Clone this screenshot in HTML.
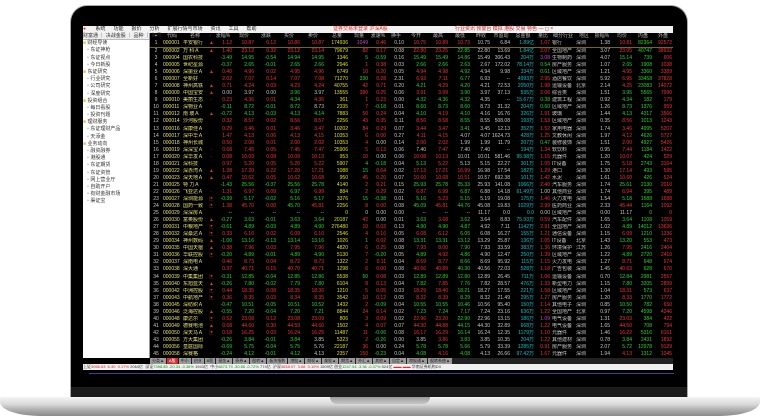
<!DOCTYPE html>
<html><head><meta charset="utf-8">
<style>
*{margin:0;padding:0;box-sizing:border-box}
body{width:760px;height:420px;background:#fff;position:relative;overflow:hidden;font-family:"Liberation Sans","Noto Sans CJK SC",sans-serif}
.lid{position:absolute;left:70px;top:5px;width:618px;height:393px;background:#000;border-radius:17px 17px 0 0;border:1px solid #aaa;border-bottom:none}
.chin{position:absolute;left:71px;top:387px;width:616px;height:10px;background:#1c1c1c}
.base{position:absolute;left:0;top:397px;width:760px;height:19px;background:linear-gradient(#f4f4f4,#d8d8d8 40%,#b8b8b8 60%,#8a8a8a);border-radius:2px 2px 40px 40px/2px 2px 14px 14px}
.notch{position:absolute;left:330px;top:397px;width:100px;height:7px;background:linear-gradient(#9a9a9a,#c8c8c8);border-radius:0 0 8px 8px}
.win{position:absolute;left:83px;top:26px;width:590px;height:344px;background:#000;font-size:5px;line-height:7px}
.menu{position:absolute;left:0;top:0;width:590px;height:7px;background:#f2f2f2;color:#222}
.menu span{margin-right:8px}
.side{position:absolute;left:0;top:7px;width:67px;height:325px;background:#fff;color:#333;border-right:1px solid #999}
.side div{height:7.2px;line-height:7.2px;white-space:nowrap}
.grid{position:absolute;left:67px;top:7px;width:523px;overflow:hidden}
table{border-collapse:collapse;table-layout:fixed;width:523px}
td{height:7.05px;line-height:7px;color:#c8c8c8;text-align:right;white-space:nowrap;overflow:hidden;padding:0 1px;font-size:5px}
tr.h td{color:#bbb;text-align:center}
td:nth-child(1){text-align:center}
td:nth-child(2),td:nth-child(3){text-align:left}
td:nth-child(21),td:nth-child(22){text-align:left}
.r{color:#ff2e2e}.g{color:#22dd22}.y{color:#e0e000}.c{color:#00c8d0}.n{color:#e6e070}.p{color:#d040d0}.m{color:#e03030;text-align:center}
tr.f td{border-bottom:1px solid #776a00}
.tabs{position:absolute;left:67px;top:332px;width:523px;height:6px;background:#222;font-size:4px;line-height:6px;color:#222}
.tabs span{display:inline-block;background:#9a9a9a;padding:0 2px;margin-right:1px;height:6px}
.status{position:absolute;left:0;top:338px;width:590px;height:6px;background:#f0f0f0;font-size:4px;line-height:6px;color:#333;white-space:nowrap}
.pl{position:absolute;left:89px;top:373px;width:585px;height:1px;background:#4a3aa0}
</style></head><body>
<div class="lid"></div>
<div class="chin"></div>
<div class="base"></div>
<div class="notch"></div>
<div class="pl"></div>
<div class="win">
 <div class="menu"><span style="color:#e33">●</span> <span>系统</span><span>功能</span><span>报价</span><span>分析</span><span>扩展行情与市场</span><span>资讯</span><span>工具</span><span>帮助</span><span style="position:absolute;left:250px;color:#e22">证券交易未登录 沪深A股</span><span style="position:absolute;left:372px;color:#c22">行业资讯 预警台 模拟 港股 交易 特色 — ◻ ×</span></div>
 <div class="side">
  <div style="background:#eee;border-bottom:1px solid #bbb">财富通 ｜ 决战金股 ｜ 品种 ｜ 资讯</div>
  <div><span style="color:#e8c040">■</span> 财经导读</div>
  <div>&nbsp;&nbsp;&nbsp;▫ 东证神枪</div><div>&nbsp;&nbsp;&nbsp;▫ 东证视点</div><div>&nbsp;&nbsp;&nbsp;▫ 今日新股</div>
  <div><span style="color:#e8c040">■</span> 东证研究</div>
  <div>&nbsp;&nbsp;&nbsp;▫ 行业研究</div><div>&nbsp;&nbsp;&nbsp;▫ 公司研究</div><div>&nbsp;&nbsp;&nbsp;▫ 深度研究</div>
  <div><span style="color:#e8c040">■</span> 投资组合</div>
  <div>&nbsp;&nbsp;&nbsp;▫ 每日看股</div><div>&nbsp;&nbsp;&nbsp;▫ 投资刊题</div>
  <div><span style="color:#e8c040">■</span> 理财服务</div>
  <div>&nbsp;&nbsp;&nbsp;▫ 东证理财产品</div><div>&nbsp;&nbsp;&nbsp;▫ 天添金</div>
  <div><span style="color:#e8c040">■</span> 业务动向</div>
  <div>&nbsp;&nbsp;&nbsp;▫ 融资融券</div><div>&nbsp;&nbsp;&nbsp;▫ 港股通</div><div>&nbsp;&nbsp;&nbsp;▫ 东证期货</div><div>&nbsp;&nbsp;&nbsp;▫ 东证资管</div><div>&nbsp;&nbsp;&nbsp;▫ 网上营业厅</div><div>&nbsp;&nbsp;&nbsp;▫ 自助开户</div><div>&nbsp;&nbsp;&nbsp;▫ 有财金融市场</div><div>&nbsp;&nbsp;&nbsp;▫ 渠证宝</div>
 </div>
 <div class="grid"><table>
<colgroup><col style="width:12px"><col style="width:20px"><col style="width:26px"><col style="width:5px"><col style="width:20px"><col style="width:22px"><col style="width:22px"><col style="width:24px"><col style="width:24px"><col style="width:24px"><col style="width:20px"><col style="width:18px"><col style="width:18px"><col style="width:22px"><col style="width:22px"><col style="width:22px"><col style="width:20px"><col style="width:20px"><col style="width:24px"><col style="width:16px"><col style="width:24px"><col style="width:18px"><col style="width:18px"><col style="width:22px"><col style="width:20px"><col style="width:20px"></colgroup>
<tr class="h"><td>▪<td>代码<td>名称<td>·<td>涨幅%<td>现价<td>涨跌<td>买价<td>卖价<td>总量<td>现量<td>涨速%<td>换手<td>今开<td>最高<td>最低<td>昨收<td>市盈动<td>总金额<td>量比<td>细分行业<td>地区<td>振幅%<td>均价<td>内盘<td>外盘</tr>
<tr class="f"><td>1<td class=n>000001<td class=n>平安银行<td class=m>▲<td class=r>1.12<td class=r>10.87<td class=r>0.12<td class=r>10.86<td class=r>10.87<td class=y>174936<td class=p>1049<td class=r>0.46<td>0.10<td class=r>10.75<td class=r>10.89<td class=r>10.73<td>10.75<td>6.84<td class=c>1.89亿<td class=r>1.07<td>银行<td>深圳<td>1.38<td class=r>10.81<td class=g>82364<td class=r>92572</tr>
<tr><td>2<td class=n>000002<td class=n>万 科Ａ<td class=m>▲<td class=r>1.40<td class=r>23.12<td class=r>0.32<td class=r>23.12<td class=r>23.14<td class=y>79679<td class=r>82<td class=r>0.17<td>0.08<td class=r>22.80<td class=r>23.25<td class=g>22.85<td>22.80<td>13.69<td class=c>1.84亿<td class=r>2.07<td>全国地产<td>深圳<td>3.07<td class=r>23.05<td class=g>40747<td class=r>38932</tr>
<tr><td>3<td class=n>000004<td class=n>国农科技<td><td class=g>-3.49<td class=g>14.95<td class=g>-0.54<td class=g>14.94<td class=g>14.95<td class=y>1346<td class=g>5<td class=g>-0.59<td>0.16<td class=g>15.49<td class=g>15.49<td class=g>14.86<td>15.49<td>306.43<td class=c>204万<td class=p>3.08<td>生物制药<td>深圳<td>4.07<td class=g>15.14<td class=g>739<td class=r>606</tr>
<tr><td>4<td class=n>000005<td class=n>世纪星源<td><td class=g>-0.37<td class=g>2.65<td class=g>-0.01<td class=g>2.65<td class=g>2.66<td class=y>2946<td class=r>1<td class=r>0.38<td>0.03<td class=g>2.66<td class=g>2.66<td class=g>2.63<td>2.67<td>172.02<td class=c>78.14万<td class=g>0.54<td>房产服务<td>深圳<td>1.07<td class=g>2.65<td class=g>1908<td class=r>1038</tr>
<tr><td>5<td class=n>000006<td class=n>深振业Ａ<td class=m>▲<td class=r>0.40<td class=r>4.96<td class=r>0.02<td class=r>4.95<td class=r>4.96<td class=y>6749<td class=r>10<td class=r>0.20<td>0.05<td class=r>4.94<td class=r>4.98<td class=g>4.92<td>4.94<td>9.98<td class=c>334万<td class=g>0.61<td>区域地产<td>深圳<td>1.21<td class=r>4.95<td class=g>3360<td class=r>3389</tr>
<tr><td>6<td class=n>000007<td class=n>全新好<td><td class=r>2.02<td class=r>7.07<td class=r>0.14<td class=r>7.07<td class=r>7.08<td class=y>71270<td class=g>330<td class=r>0.28<td>2.31<td class=r>6.93<td class=r>7.11<td class=g>6.77<td>6.93<td>--<td class=c>4993万<td class=r>2.95<td>酒店餐饮<td>深圳<td>5.92<td class=r>6.95<td class=g>33458<td class=r>37828</tr>
<tr><td>7<td class=n>000008<td class=n>神州高铁<td class=m>▲<td class=r>0.71<td class=r>4.24<td class=r>0.03<td class=r>4.23<td class=r>4.24<td class=y>40755<td class=r>42<td class=r>0.71<td>0.20<td class=g>4.21<td class=r>4.29<td class=g>4.20<td>4.21<td>72.53<td class=c>2050万<td class=r>1.98<td>运输设备<td>北京<td>2.14<td class=r>4.25<td class=g>23083<td class=r>14072</tr>
<tr><td>8<td class=n>000009<td class=n>中国宝安<td class=m>▲<td>0.00<td>3.97<td>0.00<td class=g>3.96<td>3.97<td class=y>13555<td class=r>380<td class=r>0.25<td>0.06<td class=r>3.91<td class=r>3.99<td class=g>3.90<td>3.97<td>37.13<td class=c>535万<td class=r>2.06<td>综合类<td>深圳<td>1.51<td class=g>3.95<td class=g>5565<td class=r>7990</tr>
<tr><td>9<td class=n>000010<td class=n>美丽生态<td class=p>·<td class=r>0.23<td class=r>4.36<td class=r>0.01<td class=g>4.34<td class=r>4.36<td class=y>361<td class=r>1<td class=r>0.23<td>0.00<td class=g>4.32<td class=g>4.36<td class=g>4.32<td>4.35<td>--<td class=c>15.67万<td class=g>0.38<td>建筑工程<td>深圳<td>0.92<td class=g>4.34<td class=g>182<td class=r>179</tr>
<tr><td>10<td class=n>000011<td class=n>深物业Ａ<td><td class=g>-0.11<td class=g>8.72<td class=g>-0.01<td class=g>8.72<td>8.73<td class=y>2335<td class=r>7<td class=g>-0.18<td>0.01<td class=g>8.60<td class=g>8.73<td class=g>8.60<td>8.73<td>31.32<td class=c>204万<td class=g>0.60<td>区域地产<td>深圳<td>1.26<td class=g>8.73<td class=g>1376<td class=r>959</tr>
<tr><td>11<td class=n>000012<td class=n>南 玻Ａ<td class=m>▲<td class=g>-0.72<td class=g>4.13<td class=g>-0.03<td class=g>4.13<td class=g>4.14<td class=y>7883<td class=r>50<td class=r>0.24<td>0.04<td class=g>4.10<td class=r>4.19<td class=g>4.10<td>4.16<td>16.76<td class=c>326万<td class=r>1.91<td>玻璃<td>深圳<td>1.44<td class=g>4.13<td class=g>4317<td class=r>3566</tr>
<tr><td>12<td class=n>000014<td class=n>沙河股份<td><td class=r>0.32<td class=r>8.57<td class=r>0.02<td class=r>8.56<td class=r>8.57<td class=y>2256<td class=r>43<td class=r>0.35<td>0.11<td class=r>8.56<td class=r>8.58<td class=g>8.55<td>8.55<td>508.08<td class=c>193万<td class=r>1.53<td>区域地产<td>深圳<td>0.35<td class=r>8.56<td class=g>1013<td class=r>1243</tr>
<tr><td>13<td class=n>000016<td class=n>深康佳Ａ<td><td class=r>0.29<td class=r>3.46<td class=r>0.01<td class=r>3.46<td class=r>3.47<td class=y>10202<td class=r>84<td class=r>0.29<td>0.07<td class=r>3.44<td class=r>3.47<td class=g>3.41<td>3.45<td>12.13<td class=c>352万<td class=r>1.52<td>家用电器<td>深圳<td>1.74<td class=r>3.46<td class=g>4995<td class=r>5207</tr>
<tr><td>14<td class=n>000017<td class=n>深中华Ａ<td><td class=r>1.47<td class=r>4.13<td class=r>0.06<td class=r>4.13<td class=r>4.15<td class=y>10353<td class=r>6<td class=r>0.00<td>0.27<td class=r>4.11<td class=r>4.15<td>4.07<td>4.07<td>1624.73<td class=c>428万<td class=r>1.25<td>文教休闲<td>深圳<td>1.97<td class=r>4.12<td class=g>4626<td class=r>5727</tr>
<tr><td>15<td class=n>000018<td class=n>神州长城<td><td class=r>0.50<td class=r>2.00<td class=r>0.01<td class=r>2.00<td class=r>2.02<td class=y>10353<td class=r>4<td>0.00<td>0.14<td class=r>2.00<td class=r>2.02<td>1.99<td>1.99<td>11.79<td class=c>207万<td class=g>0.47<td>装修装饰<td>深圳<td>1.51<td class=r>2.00<td class=g>4927<td class=r>5426</tr>
<tr><td>16<td class=n>000019<td class=n>深深宝Ａ<td class=p>·<td class=r>0.68<td class=r>7.45<td class=r>0.05<td class=r>7.45<td class=r>7.47<td class=y>25906<td class=r>5<td class=r>0.13<td>0.06<td>7.40<td class=r>7.47<td>7.40<td>7.40<td>--<td class=c>194万<td class=r>1.34<td>软饮料<td>深圳<td>0.95<td class=r>7.44<td class=g>1184<td class=r>1422</tr>
<tr><td>17<td class=n>000020<td class=n>深华发Ａ<td class=p>·<td class=r>0.08<td class=r>10.09<td class=r>0.08<td class=r>10.09<td class=r>10.13<td class=y>953<td class=r>10<td>0.00<td>0.06<td class=r>10.08<td class=r>10.13<td>10.01<td>10.01<td>581.46<td class=c>95.98万<td class=r>1.15<td>元器件<td>深圳<td>1.20<td class=r>10.07<td class=g>424<td class=r>529</tr>
<tr><td>18<td class=n>000021<td class=n>深科技<td><td class=r>0.97<td class=r>5.20<td class=r>0.05<td class=r>5.20<td class=r>5.22<td class=y>5907<td class=g>4<td class=g>-0.18<td>0.04<td class=g>5.13<td class=r>5.22<td>5.13<td>5.15<td>22.27<td class=c>301万<td class=r>1.05<td>IT设备<td>深圳<td>1.75<td class=r>5.18<td class=g>2743<td class=r>3164</tr>
<tr><td>19<td class=n>000022<td class=n>深赤湾Ａ<td class=m>▲<td class=r>1.38<td class=r>17.20<td class=r>0.22<td class=r>17.20<td class=r>17.21<td class=y>1088<td class=g>15<td class=r>0.64<td>0.02<td class=r>17.13<td class=r>17.21<td class=r>16.99<td>16.98<td>17.54<td class=c>182万<td class=r>1.29<td>港口<td>深圳<td>1.30<td class=r>17.14<td class=g>493<td class=r>595</tr>
<tr><td>20<td class=n>000023<td class=n>深天地Ａ<td class=m>▲<td class=r>0.47<td class=r>10.62<td class=r>0.05<td class=r>10.62<td class=r>10.68<td class=y>950<td class=r>45<td class=r>0.20<td>0.07<td class=r>10.60<td class=r>10.68<td class=r>10.51<td>10.57<td>692.38<td class=c>101万<td class=r>1.42<td>水泥<td>深圳<td>1.61<td class=r>10.60<td class=g>426<td class=r>524</tr>
<tr><td>21<td class=n>000025<td class=n>特 力Ａ<td><td class=g>-1.43<td class=g>25.56<td class=g>-0.37<td class=g>25.56<td class=g>25.78<td class=y>4140<td class=r>2<td class=r>0.21<td>0.15<td class=g>25.93<td class=g>25.78<td class=g>25.33<td>25.93<td>141.08<td class=c>1066万<td class=r>2.40<td>汽车服务<td>深圳<td>1.74<td class=g>25.61<td class=g>2130<td class=r>2010</tr>
<tr><td>22<td class=n>000026<td class=n>飞亚达Ａ<td class=p>·<td class=r>1.31<td class=r>6.97<td class=r>0.09<td class=g>6.97<td class=r>6.99<td class=y>884<td class=r>2<td class=r>0.29<td>0.02<td class=r>6.87<td class=r>6.99<td class=g>6.87<td>6.88<td>14.18<td class=c>61.49万<td>1.00<td>其他商业<td>深圳<td>1.74<td class=r>6.94<td class=g>395<td class=r>489</tr>
<tr><td>23<td class=n>000027<td class=n>深圳能源<td class=m>▣<td class=g>-0.39<td class=g>5.17<td class=g>-0.02<td class=g>5.16<td class=g>5.17<td class=y>3376<td class=g>15<td class=g>-0.38<td>0.01<td class=g>5.16<td class=r>5.23<td class=g>5.15<td>5.19<td>19.08<td class=c>175万<td class=r>1.46<td>火力发电<td>深圳<td>1.54<td class=g>5.18<td class=g>1688<td class=r>1688</tr>
<tr><td>24<td class=n>000028<td class=n>国药一致<td class=m>▣<td class=r>1.38<td class=r>45.70<td class=r>0.00<td class=g>45.70<td class=r>45.81<td class=y>2256<td class=r>8<td class=r>0.00<td>0.08<td class=g>45.09<td class=r>45.81<td class=g>44.76<td>45.08<td>19.83<td class=c>1029万<td class=r>2.99<td>医药商业<td>深圳<td>2.33<td class=r>45.44<td class=g>1164<td class=r>1092</tr>
<tr><td>25<td class=n>000029<td class=n>深深房Ａ<td><td>--<td>--<td>--<td>--<td>--<td class=y>0<td>0<td>0.00<td>0.00<td>--<td>--<td>--<td>11.17<td>0.0<td class=c>0.0<td>0.00<td>区域地产<td>深圳<td>0.00<td>11.17<td class=g>0<td class=r>0</tr>
<tr><td>26<td class=n>000030<td class=n>富奥股份<td class=m>▲<td class=g>-0.27<td class=g>3.63<td class=g>-0.01<td class=g>3.63<td class=g>3.64<td class=y>20187<td class=r>42<td>0.00<td>0.01<td class=g>3.63<td class=r>3.68<td class=g>3.62<td>3.64<td>8.83<td class=c>75.93万<td class=r>0.59<td>汽车配件<td>深圳<td>1.65<td class=g>3.64<td class=g>1108<td class=r>1059</tr>
<tr><td>27<td class=n>000031<td class=n>中粮地产<td class=m>▣<td class=g>-0.61<td class=g>4.89<td class=g>-0.03<td class=g>4.89<td class=g>4.90<td class=y>276480<td class=r>10<td class=r>0.02<td>0.13<td class=g>4.90<td class=g>4.90<td class=g>4.87<td>4.92<td>7.11<td class=c>1142万<td class=r>2.91<td>全国地产<td>深圳<td>1.02<td class=g>4.89<td class=g>14012<td class=r>13636</tr>
<tr><td>28<td class=n>000032<td class=n>深桑达Ａ<td class=m>▣<td class=r>0.33<td class=r>6.10<td class=r>0.02<td class=r>6.09<td class=r>6.10<td class=y>2546<td class=r>4<td class=r>0.16<td>0.05<td class=r>6.08<td class=r>6.12<td class=g>6.05<td>6.08<td>16.27<td class=c>155万<td class=r>1.21<td>通信设备<td>深圳<td>1.15<td class=r>6.09<td class=g>1210<td class=r>1336</tr>
<tr><td>29<td class=n>000034<td class=n>神州数码<td class=m>▲<td class=g>-1.00<td class=g>13.16<td class=g>-0.13<td class=g>13.14<td class=g>13.16<td class=y>1026<td class=g>1<td class=r>0.02<td>0.08<td class=g>13.31<td class=g>13.31<td class=g>13.12<td>13.29<td>25.87<td class=c>136万<td class=r>1.05<td>IT设备<td>北京<td>1.43<td class=g>13.20<td class=g>553<td class=r>473</tr>
<tr><td>30<td class=n>000035<td class=n>中国天楹<td class=m>▲<td class=r>0.38<td class=r>7.96<td class=r>0.03<td class=r>7.95<td class=r>7.96<td class=y>4820<td class=r>6<td class=r>0.25<td>0.08<td class=r>7.93<td class=r>8.00<td class=g>7.90<td>7.93<td>33.59<td class=c>383万<td class=r>1.36<td>环境保护<td>江苏<td>1.26<td class=r>7.95<td class=g>2416<td class=r>2404</tr>
<tr><td>31<td class=n>000036<td class=n>华联控股<td class=m>▣<td class=g>-0.20<td class=g>4.89<td class=g>-0.01<td class=g>4.89<td class=g>4.90<td class=y>5130<td class=r>7<td class=g>-0.20<td>0.05<td class=g>4.89<td class=r>4.92<td class=g>4.86<td>4.90<td>12.47<td class=c>250万<td class=r>1.39<td>区域地产<td>深圳<td>1.22<td class=g>4.89<td class=g>2720<td class=r>2410</tr>
<tr><td>32<td class=n>000037<td class=n>深南电Ａ<td><td class=r>0.46<td class=r>8.73<td class=r>0.04<td class=r>8.72<td class=r>8.73<td class=y>1322<td class=r>2<td class=r>0.11<td>0.04<td class=r>8.69<td class=r>8.77<td class=g>8.66<td>8.69<td>95.92<td class=c>115万<td class=r>1.15<td>火力发电<td>深圳<td>1.27<td class=r>8.71<td class=g>648<td class=r>674</tr>
<tr><td>33<td class=n>000038<td class=n>深大通<td><td class=r>0.37<td class=r>40.71<td class=r>0.15<td class=r>40.70<td class=r>40.71<td class=y>1298<td class=r>6<td class=r>0.00<td>0.08<td class=r>40.56<td class=r>40.89<td class=g>40.30<td>40.56<td>72.03<td class=c>528万<td class=r>1.18<td>广告包装<td>深圳<td>1.45<td class=r>40.63<td class=g>628<td class=r>670</tr>
<tr><td>34<td class=n>000039<td class=n>中集集团<td class=m>▣<td class=g>-0.31<td class=g>12.85<td class=g>-0.04<td class=g>12.85<td class=g>12.86<td class=y>5538<td class=g>50<td class=r>0.08<td>0.03<td class=g>12.89<td class=g>12.89<td class=g>12.80<td>12.89<td>26.45<td class=c>711万<td class=r>1.06<td>运输设备<td>深圳<td>0.70<td class=g>12.84<td class=g>2981<td class=r>2557</tr>
<tr><td>35<td class=n>000040<td class=n>东旭蓝天<td class=m>▲<td class=g>-0.26<td class=g>7.80<td class=g>-0.02<td class=g>7.79<td class=g>7.80<td class=y>6104<td class=r>8<td class=r>0.13<td>0.04<td class=g>7.82<td class=r>7.85<td class=g>7.76<td>7.82<td>28.57<td class=c>476万<td class=r>1.33<td>新型电力<td>深圳<td>1.15<td class=g>7.80<td class=g>3205<td class=r>2899</tr>
<tr><td>36<td class=n>000042<td class=n>中洲控股<td class=m>▣<td class=r>0.44<td class=r>18.35<td class=r>0.08<td class=r>18.35<td class=r>18.36<td class=y>1210<td class=r>5<td class=r>0.05<td>0.03<td class=r>18.29<td class=r>18.40<td class=g>18.21<td>18.27<td>17.55<td class=c>221万<td class=r>1.58<td>区域地产<td>深圳<td>1.04<td class=r>18.31<td class=g>573<td class=r>637</tr>
<tr><td>37<td class=n>000043<td class=n>中航地产<td class=m>▣<td class=r>0.36<td class=r>8.35<td class=r>0.03<td class=r>8.34<td class=r>8.35<td class=y>3542<td class=r>10<td class=r>0.12<td>0.05<td class=r>8.32<td class=r>8.39<td class=g>8.29<td>8.32<td>21.49<td class=c>295万<td class=r>1.27<td>房产服务<td>深圳<td>1.20<td class=r>8.33<td class=g>1770<td class=r>1772</tr>
<tr><td>38<td class=n>000045<td class=n>深纺织Ａ<td><td class=g>-0.47<td class=g>10.51<td class=g>-0.05<td class=g>10.51<td class=g>10.52<td class=y>1432<td class=r>2<td class=g>-0.09<td>0.04<td class=g>10.55<td class=g>10.55<td class=g>10.46<td>10.56<td>95.40<td class=c>150万<td class=r>1.14<td>其他电子<td>深圳<td>0.85<td class=g>10.50<td class=g>782<td class=r>650</tr>
<tr><td>39<td class=n>000046<td class=n>泛海控股<td class=m>▲<td class=g>-0.55<td class=g>7.20<td class=g>-0.04<td class=g>7.20<td class=g>7.21<td class=y>8844<td class=r>24<td class=r>0.14<td>0.02<td class=g>7.23<td class=g>7.24<td class=g>7.17<td>7.24<td>23.16<td class=c>636万<td class=r>1.22<td>全国地产<td>北京<td>0.97<td class=g>7.20<td class=g>4598<td class=r>4246</tr>
<tr><td>40<td class=n>000048<td class=n>康达尔<td class=m>▣<td class=r>0.52<td class=r>23.08<td class=r>0.12<td class=r>23.08<td class=r>23.09<td class=y>806<td class=r>3<td class=r>0.09<td>0.02<td class=r>22.96<td class=r>23.20<td class=g>22.90<td>22.96<td>13.15<td class=c>186万<td class=p>1.09<td>电气设备<td>深圳<td>1.31<td class=r>23.03<td class=g>384<td class=r>422</tr>
<tr><td>41<td class=n>000049<td class=n>德赛电池<td class=m>▲<td class=r>0.68<td class=r>44.60<td class=r>0.30<td class=r>44.59<td class=r>44.60<td class=y>1502<td class=r>4<td class=r>0.07<td>0.07<td class=r>44.30<td class=r>44.88<td class=g>44.15<td>44.30<td>32.89<td class=c>668万<td class=r>1.22<td>电气设备<td>深圳<td>1.65<td class=r>44.50<td class=g>708<td class=r>794</tr>
<tr><td>42<td class=n>000050<td class=n>深天马Ａ<td class=m>▣<td class=r>0.18<td class=r>16.25<td class=r>0.03<td class=r>16.24<td class=r>16.25<td class=y>11487<td class=r>11<td class=g>-0.06<td>0.08<td class=r>16.17<td class=r>16.29<td class=g>16.14<td>16.24<td>12.35<td class=c>1179万<td class=r>1.10<td>元器件<td>深圳<td>1.46<td class=r>16.22<td class=g>5316<td class=r>6161</tr>
<tr><td>43<td class=n>000055<td class=n>方大集团<td><td class=g>-0.26<td class=g>3.84<td class=g>-0.01<td class=g>3.84<td>3.85<td class=y>5323<td class=r>2<td class=g>-0.26<td>0.00<td>3.85<td class=r>3.86<td class=g>3.83<td>3.85<td>10.35<td class=c>204万<td class=r>1.22<td>其他建材<td>深圳<td>0.78<td class=g>3.84<td class=g>2431<td class=r>1892</tr>
<tr><td>44<td class=n>000056<td class=n>皇庭国际<td><td class=g>-0.69<td class=g>5.75<td class=g>-0.04<td class=g>5.75<td>5.76<td class=y>22187<td class=r>36<td>0.00<td>0.24<td class=g>5.78<td class=g>5.78<td class=g>5.66<td>5.79<td>33.39<td class=c>1285万<td class=r>0.91<td>房产服务<td>深圳<td>2.07<td class=g>5.72<td class=g>12978<td class=r>9129</tr>
<tr><td>45<td class=n>000058<td class=n>深赛格<td class=m>·<td class=g>-0.24<td class=g>4.12<td class=g>-0.01<td class=g>4.12<td>4.13<td class=y>2357<td class=r>150<td class=g>-0.23<td>0.04<td class=g>4.08<td class=r>4.16<td class=g>4.08<td>4.13<td>26.66<td class=c>97.42万<td class=r>1.67<td>元器件<td>深圳<td>1.94<td class=r>4.13<td class=g>1312<td class=r>1045</tr>
</table></div>
 <div class="tabs"><span>分类▲</span><span style="background:#d03030;color:#fff">A股</span><span>中小</span><span>创业</span><span>B股</span><span>基金▲</span><span>债券▲</span><span>股转▲</span><span>板块指数</span><span>港股▲</span><span>期权▲</span><span>美股▲</span><span>期货▲</span><span>外汇▲</span><span>其他▲</span><span>自定▲</span><span>港股通▲</span><span>股转系统▲</span></div>
 <div class="status">上证<span style="color:#e22">3066.63 &nbsp;6.30 &nbsp;0.17%</span> 2064亿 &nbsp;深证<span style="color:#090">7398.85 -20.34 -0.36%</span> 1943亿 &nbsp;中小<span style="color:#090">6873.79 -30.66 -0.72%</span> 774亿 &nbsp;沪深<span style="color:#e22">3658.07 &nbsp;3.68 &nbsp;0.10%</span> 1509亿 创业<span style="color:#090">1247.54 -3.36 -0.37%</span> 524亿 <span style="color:#e22">▬▬ ▬▬</span> 华南证券机构DX</div>
</div>
</body></html>
